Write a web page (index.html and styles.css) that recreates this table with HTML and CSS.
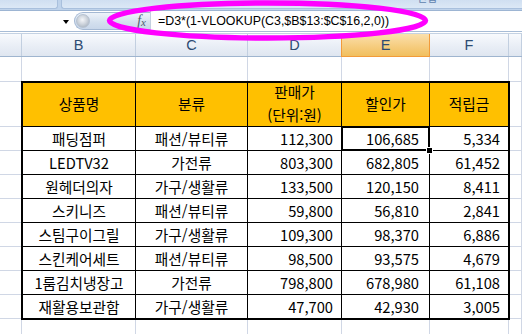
FILE: index.html
```html
<!DOCTYPE html>
<html lang="ko">
<head>
<meta charset="utf-8">
<title>Excel VLOOKUP</title>
<link rel="stylesheet" href="styles.css">
</head>
<body>
<div class="app">
  <div class="ribbon">
    <div class="group g1"></div>
    <div class="group g2"><span class="grp-label">편집</span></div>
  </div>
  <div class="formula-bar">
    <div class="name-box"><span class="dd"></span></div>
    <div class="fx-pill"><span class="knob"></span><span class="fx"><i>f</i><span class="fxx">x</span></span></div>
    <div class="formula">=D3*(1-VLOOKUP(C3,$B$13:$C$16,2,0))</div>
  </div>
  <div class="col-headers">
    <div class="ch"></div>
    <div class="ch">B</div>
    <div class="ch">C</div>
    <div class="ch">D</div>
    <div class="ch sel">E</div>
    <div class="ch">F</div>
    <div class="ch"></div>
  </div>
  <div class="sheet">
    <div class="data">
      <div class="c h">상품명</div>
      <div class="c h">분류</div>
      <div class="c h two"><span>판매가<br>(단위:원)</span></div>
      <div class="c h">할인가</div>
      <div class="c h">적립금</div>

      <div class="c">패딩점퍼</div>
      <div class="c">패션/뷰티류</div>
      <div class="c n">112,300</div>
      <div class="c n e active">106,685<span class="selbox"></span><span class="handle"></span></div>
      <div class="c n">5,334</div>

      <div class="c">LEDTV32</div>
      <div class="c">가전류</div>
      <div class="c n">803,300</div>
      <div class="c n e">682,805</div>
      <div class="c n">61,452</div>

      <div class="c">원헤더의자</div>
      <div class="c">가구/생활류</div>
      <div class="c n">133,500</div>
      <div class="c n e">120,150</div>
      <div class="c n">8,411</div>

      <div class="c">스키니즈</div>
      <div class="c">패션/뷰티류</div>
      <div class="c n">59,800</div>
      <div class="c n e">56,810</div>
      <div class="c n">2,841</div>

      <div class="c">스팀구이그릴</div>
      <div class="c">가구/생활류</div>
      <div class="c n">109,300</div>
      <div class="c n e">98,370</div>
      <div class="c n">6,886</div>

      <div class="c">스킨케어세트</div>
      <div class="c">패션/뷰티류</div>
      <div class="c n">98,500</div>
      <div class="c n e">93,575</div>
      <div class="c n">4,679</div>

      <div class="c">1룸김치냉장고</div>
      <div class="c">가전류</div>
      <div class="c n">798,800</div>
      <div class="c n e">678,980</div>
      <div class="c n">61,108</div>

      <div class="c">재활용보관함</div>
      <div class="c">가구/생활류</div>
      <div class="c n">47,700</div>
      <div class="c n e">42,930</div>
      <div class="c n">3,005</div>
    </div>

    <div class="g"></div><div class="g"></div><div class="g"></div><div class="g"></div><div class="g"></div><div class="g"></div><div class="g"></div>
    <div class="g"></div><div class="g"></div>
    <div class="g"></div><div class="g"></div>
    <div class="g"></div><div class="g"></div>
    <div class="g"></div><div class="g"></div>
    <div class="g"></div><div class="g"></div>
    <div class="g"></div><div class="g"></div>
    <div class="g"></div><div class="g"></div>
    <div class="g"></div><div class="g"></div>
    <div class="g"></div><div class="g"></div>
    <div class="g"></div><div class="g"></div><div class="g"></div><div class="g"></div><div class="g"></div><div class="g"></div><div class="g"></div>
  </div>

  <svg class="annot" width="522" height="50" viewBox="0 0 522 50">
    <ellipse cx="267.5" cy="20.5" rx="158" ry="17.5" fill="none" stroke="#ff00ff" stroke-width="5.5"/>
  </svg>
</div>
</body>
</html>
```

FILE: styles.css
```css
* { box-sizing: border-box; }

html, body {
  margin: 0;
  padding: 0;
  width: 522px;
  height: 334px;
  overflow: hidden;
  background: #ffffff;
}

.app {
  position: relative;
  width: 522px;
  height: 334px;
  overflow: hidden;
  font-family: "Noto Sans CJK KR", "Noto Sans", sans-serif;
}

/* ribbon remnant */
.ribbon {
  display: flex;
  height: 11px;
  background: #bfd3eb;
  border-bottom: 1px solid #9db5d3;
}
.group {
  height: 9px;
  background: linear-gradient(#d0dff1, #dce8f6);
  border-bottom: 1px solid #a9c0dd;
}
.g1 {
  width: 58px;
  border-right: 1px solid #a9c0dd;
  border-bottom-right-radius: 3px;
}
.g2 {
  flex: 1;
  margin-left: 3px;
  border-left: 1px solid #a9c0dd;
  border-bottom-left-radius: 3px;
  position: relative;
  overflow: hidden;
}
.grp-label {
  position: absolute;
  left: 355px;
  top: -10px;
  font-size: 11px;
  line-height: 14px;
  color: #5e7fae;
}

/* formula bar */
.formula-bar {
  display: flex;
  height: 21px;
  background: #ffffff;
  border-bottom: 1px solid #a7bcd6;
}
.name-box {
  width: 74px;
  position: relative;
  display: flex;
  align-items: center;
  justify-content: flex-end;
  padding-right: 5px;
}
.dd {
  width: 0;
  height: 0;
  border-left: 3.5px solid transparent;
  border-right: 3.5px solid transparent;
  border-top: 4px solid #000;
  margin-top: 1px;
}
.fx-pill {
  width: 76px;
  margin: 1px 0 1px 0;
  display: flex;
  align-items: center;
  justify-content: space-between;
  background: linear-gradient(#eef3fa, #d3dfee 60%, #c9d7ea);
  border: 1px solid #a4b8d3;
  border-right: none;
  border-radius: 10px 0 0 10px;
  padding: 0 4px 0 1px;
}
.knob {
  width: 14px;
  height: 14px;
  border-radius: 50%;
  background: radial-gradient(circle at 45% 40%, #f4f6f9 0%, #cfd5dd 45%, #9aa6b5 100%);
  border: 1px solid #b6c2d1;
}
.fx {
  font-family: "Liberation Serif", serif;
  color: #4e5d70;
  font-size: 14px;
  line-height: 14px;
  display: flex;
  align-items: flex-end;
}
.fx i { font-style: italic; }
.fxx {
  font-style: italic;
  font-size: 11px;
  line-height: 11px;
  margin-left: 0px;
}
.formula {
  flex: 1;
  border-left: 1px solid #c3d0e0;
  padding-left: 7px;
  font-family: "Liberation Sans", Arial, sans-serif;
  font-size: 12.4px;
  line-height: 20px;
  color: #000;
  white-space: nowrap;
}

/* column headers */
.col-headers {
  display: grid;
  grid-template-columns: 22px 114px 112px 94px 88px 79px 1fr;
  height: 24px;
  margin-top: 1px;
  border-top: 1px solid #c4d2e3;
  border-bottom: 1px solid #9fb5cf;
  background: linear-gradient(#f8fafd, #e9eef6 55%, #dfe6f0);
}
.ch {
  border-right: 1px solid #c2cfe0;
  display: flex;
  align-items: center;
  justify-content: center;
  font-family: "Liberation Sans", Arial, sans-serif;
  font-size: 14.5px;
  color: #2d4b72;
}
.ch.sel {
  background: linear-gradient(#fae0ad, #f6cd80 55%, #f1bf5e);
  border-left: 1px solid #f29b3a;
  border-right: 1px solid #f29b3a;
  margin-left: -1px;
  margin-bottom: -1px;
  border-bottom: 1px solid #f29b3a;
}

/* sheet grid */
.sheet {
  display: grid;
  grid-template-columns: 22px 114px 112px 94px 88px 79px 1fr;
  grid-template-rows: 25px 45px repeat(8, 24px) 24px;
}
.g {
  border-right: 1px solid #d0d7e5;
  border-bottom: 1px solid #d0d7e5;
}

.data {
  grid-column: 2 / 7;
  grid-row: 2 / 11;
  margin: -1px;
  display: grid;
  grid-template-columns: 113px 112px 94px 88px 79px;
  grid-template-rows: 44px repeat(8, 24px);
  border-top: 2px solid #000;
  border-left: 2px solid #000;
  border-right: 1px solid #000;
  border-bottom: 1px solid #000;
  background: #fff;
  position: relative;
  z-index: 1;
}
.c {
  border-right: 1px solid #000;
  border-bottom: 1px solid #000;
  display: flex;
  align-items: center;
  justify-content: center;
  font-size: 14.7px;
  line-height: 18px;
  color: #000;
  white-space: nowrap;
}
.c.h {
  background: #ffc000;
  padding-bottom: 1px;
}
.c.two {
  padding-bottom: 4px;
  text-align: center;
  line-height: 23px;
}
.c.n {
  justify-content: flex-end;
  padding-right: 8px;
}
.c.n.e {
  padding-right: 10px;
}
.active {
  position: relative;
}
.selbox {
  position: absolute;
  left: -1px;
  top: -1px;
  right: -1px;
  bottom: -1px;
  border: 2px solid #000;
  box-shadow: inset 0 0 0 1px #fff;
}
.handle {
  position: absolute;
  right: -4px;
  bottom: -4px;
  width: 7px;
  height: 7px;
  background: #000;
  border: 1px solid #fff;
}

.annot {
  position: absolute;
  left: 0;
  top: 0;
  pointer-events: none;
  z-index: 5;
}
```
